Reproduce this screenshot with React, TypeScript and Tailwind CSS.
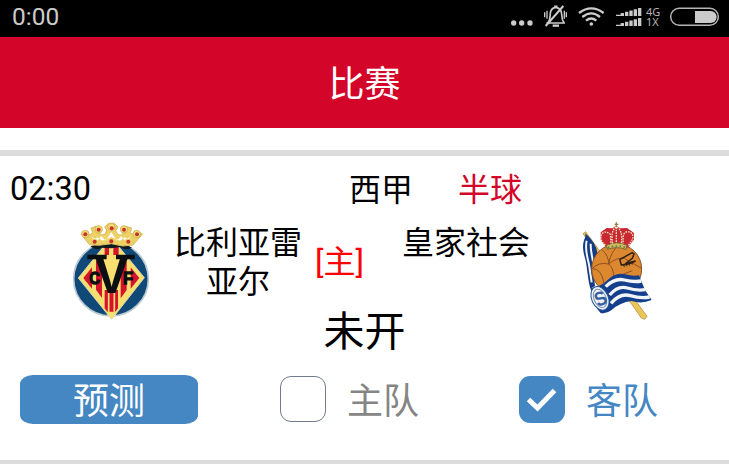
import React from 'react';

const signalBars = [1, 2, 3, 4, 5];

function StatusIcons() {
  return (
    <div className="flex h-[37px]">
      <svg className="h-[37px] w-[40px]" viewBox="0 0 120 111" fill="#cbcbcb">
        <circle cx="41" cy="69" r="8" />
        <circle cx="65" cy="69" r="8" />
        <circle cx="90" cy="69" r="8" />
      </svg>
      <svg className="h-[37px] w-[30px]" viewBox="120 0 90 111" fill="none" stroke="#cbcbcb" strokeWidth="5">
        <path d="M139 69h56M144 68c7-8 6-17 7-29 2-11 7-15 14-16v-4h5v4c10 2 14 9 15 19 1 9 0 18 7 26" />
        <path d="M190 18l-53 60" strokeWidth="6" />
        <path d="M158 77h19" strokeWidth="7" />
        <path d="M134 37v15M141 32v24M193 32v24M199 37v15" strokeWidth="4" />
      </svg>
      <svg className="h-[37px] w-[38px]" viewBox="210 0 114 111" fill="none" stroke="#cbcbcb" strokeWidth="7">
        <path d="M237 39q37-28 74 0M247 51q27-22 53 0M258 62q16-13 31 0" />
        <circle cx="274" cy="72" r="5.5" fill="#cbcbcb" stroke="none" />
      </svg>
      <svg className="h-[37px] w-[38px]" viewBox="324 0 114 111" fill="#cbcbcb">
        <path d="M348 44h24v4h-24zM348 74h24v4h-24z" />
        {signalBars.map((i) => (
          <React.Fragment key={i}>
            <rect x={349 + i * 13} y={43 - i * 3.8} width="10" height={5 + i * 3.8} />
            <rect x={349 + i * 13} y={73 - i * 3.8} width="10" height={5 + i * 3.8} />
          </React.Fragment>
        ))}
      </svg>
      <div className="w-[22px] pt-[7px] font-['Noto_Sans',sans-serif] text-[11px] leading-[10px] text-[#b5b5b5]">
        <div>4G</div>
        <div>1X</div>
      </div>
      <svg className="h-[37px] w-[61px]" viewBox="504 0 183 111">
        <rect x="512" y="25" width="143" height="51" rx="25.5" fill="none" stroke="#b5b5b5" strokeWidth="4.5" />
        <path d="M585 33h47a18 18 0 0 1 0 36h-47z" fill="#cbcbcb" />
      </svg>
    </div>
  );
}

function VillarrealCrest() {
  return (
    <svg className="h-[110px] w-[100px]" viewBox="0 0 300 330">
      <ellipse cx="153" cy="192" rx="112" ry="111" fill="#104878" stroke="#b9c9d1" strokeWidth="5" />
      <path d="M153 67L253 188L155 313L55 189Z" fill="#f7df70" stroke="#d9d8b1" strokeWidth="3" />
      <path d="M108 137l18 10v102l-18-25zM134 90l13-10v40h-13zM160 82l16 14v24h-16zM182 160l18-20v85l-18 25zM134 225h40v55l-8 10h-24l-8-10zM70 189l26-32v64zM212 157l26 32-26 32z" fill="#d4142c" />
      <path d="M146 230v70M163 230v66" stroke="#f7df70" strokeWidth="5" />
      <path d="M82 119h58v14h-58zM168 119h56v14h-56z" fill="#0b0f12" />
      <g fill="#0b0f12" fontFamily="Liberation Sans, sans-serif" fontWeight="700">
        <text x="103" y="234" fontSize="160" textLength="104" lengthAdjust="spacingAndGlyphs">V</text>
        <g stroke="#0b0f12" strokeWidth="4">
          <text x="88" y="208" fontSize="52" textLength="32" lengthAdjust="spacingAndGlyphs">C</text>
          <text x="189" y="208" fontSize="52" textLength="30" lengthAdjust="spacingAndGlyphs">F</text>
        </g>
      </g>
      <path d="M91 94l28-8 30 2 5-8 8 8 30-2 24 12q-20 10-34-2l-29 4-30-2q-15 11-32-4z" fill="#101b20" />
      <path d="M88 89L63 57l15-8 11 11 9-7-5-14 14-5 14 10-1 16 15-2 5-13-6-9 11-11h18l11 11-7 12 8 11 14 2-3-16 12-11 17 5-4 14 9 6 11-10 17 8-29 33-31 3-34-7-36 5z" fill="#eed164" stroke="#d7bd61" strokeWidth="3" />
      <path d="M93 64l21 12 10-14 12 15 18-25 17 25 13-14 9 13 22-13-10 10-11-6-14 10-26-11-27 11-14-10-10 6z" fill="white" />
      <g fill="#f5df76" stroke="#d3b75c" strokeWidth="3">
        {[[76,57],[116,43],[154,36],[192,43],[230,57]].map(([x,y]) => <circle key={x} cx={x} cy={y} r="11" />)}
      </g>
      <g fill="#c9312c">
        {[[76,58],[116,44],[155,40],[192,44],[231,58],[104,80],[154,79],[205,80]].map(([x,y]) => <circle key={x} cx={x} cy={y} r="6" />)}
      </g>
    </svg>
  );
}

function SociedadCrest() {
  return (
    <svg className="h-[110px] w-[100px]" viewBox="0 0 300 330">
      <path d="M39 56l8-6 184 254-7 9-10-4z" fill="#eac557" stroke="#a98337" strokeWidth="2" />
      <path d="M46 65c-12 26-6 46 0 68 6 25 6 53 15 88l14-8-5-45 12-55q-3-28-36-58z" fill="#163b85" />
      <path d="M50 77c-7 30 5 56 8 78l7 47M62 86c-1 28 9 49 9 76" fill="none" stroke="#f3f6f8" strokeWidth="6" />
      <circle cx="140" cy="162" r="75" fill="#db8830" stroke="#884e29" strokeWidth="3" />
      <path d="M95 103q22 20 21 44-30-7-49 14M116 147q17 15 15 42M116 147q25-21 47-17l50 29M131 189l56-22M148 88q-26 22-32 59M67 161q27 0 35 43" fill="none" stroke="#91511f" strokeWidth="3" />
      <path d="M150 133l37-20 5 4-5 13-22 17 31-9M149 133l5 17q20-1 43-12" fill="none" stroke="#302017" strokeWidth="4.5" />
      <path d="M160 147l3 9m5-11l3 9m5-11l3 9m5-12l3 9" stroke="#302017" strokeWidth="2.5" />
      <path d="M62 220Q94 215 112 196Q135 171 165 178Q190 185 207 181L225 225L245 255Q215 268 185 258Q150 262 125 285Q108 298 92 294Q65 270 62 220Z" fill="#153f8d" />
      <path d="M107 215Q134 188 163 195T214 198M119 240Q144 210 172 219T226 224M123 265Q150 233 181 242T239 246" fill="none" stroke="#f2f5f8" strokeWidth="10" />
      <ellipse cx="90" cy="250" rx="25" ry="37" transform="rotate(-24 90 250)" fill="#edf2f7" stroke="#265291" strokeWidth="3" />
      <ellipse cx="90" cy="250" rx="18" ry="29" transform="rotate(-24 90 250)" fill="none" stroke="#7894ba" strokeWidth="3" />
      <text x="91" y="272" textAnchor="middle" transform="rotate(-24 90 250)" fill="#365e9c" fontFamily="Liberation Sans, sans-serif" fontWeight="700" fontSize="60" textLength="35" lengthAdjust="spacingAndGlyphs">S</text>
      <path d="M108 96L92 75V52l18-13 17 1 12-8 12 8 20-1 21 15v20l-19 24-35-8z" fill="#c92832" />
      <path d="M109 91q31-15 62 0l-3 12q-28-10-56 0z" fill="#d8ba59" stroke="#796637" strokeWidth="3" />
      <path d="M106 91Q84 70 98 54q11-7 23 4l2 28M175 91q22-23 9-37-14-10-24 5l-1 27M128 85q-7-38 11-50 20 10 15 50M139 36v48" fill="none" stroke="#eee1bd" strokeWidth="4" strokeDasharray="5 3" />
      <path d="M113 98q29-10 57 0" fill="none" stroke="#4d8061" strokeWidth="5" strokeDasharray="5 7" />
      <path d="M139 22v14M134 28h11" stroke="#93813e" strokeWidth="4" />
    </svg>
  );
}

export default function App() {
  return (
    <main className="h-[464px] w-[729px] overflow-hidden bg-white font-[Roboto,'Noto_Sans_CJK_SC',sans-serif] text-[32px] text-black" lang="zh-CN">
      <header>
        <div className="flex h-[37px] items-start justify-between bg-black">
          <time className="pl-[12px] pt-[2px] text-[24.5px] leading-[30px] text-[#cbcbcb]">0:00</time>
          <StatusIcons />
        </div>
        <h1 className="flex h-[91px] items-center justify-center bg-[#d30528] pt-[4px] text-[36px] leading-none text-white">比赛</h1>
      </header>
      <section className="mt-[22px] h-[316px] border-y-[6px] border-[#dcdcdc]">
        <div className="flex h-[64px] items-center pl-[10px] pt-[3px] leading-none">
          <time className="w-[339px] text-[32.5px]">02:30</time>
          <span className="w-[109px]">西甲</span>
          <span className="text-[#d30528]">半球</span>
        </div>
        <div className="flex h-[84px] pl-[60px] leading-[39px]">
          <div className="-mt-[5px] w-[114px]"><VillarrealCrest /></div>
          <div className="w-[128px] pt-[4px] text-center">比利亚雷亚尔</div>
          <div className="w-[100px] pl-[13px] pt-[23px] text-[red]">[主]</div>
          <div className="w-[168px] pt-[4px]">皇家社会</div>
          <div className="-mt-[5px]"><SociedadCrest /></div>
        </div>
        <div className="flex h-[54px] items-center justify-center pt-[2px] text-[41px] leading-none">未开</div>
        <div className="flex h-[82px] items-center pl-[20px] text-[36px] leading-none">
          <button className="h-[49px] w-[178px] rounded-[13px/9px] bg-[#4587c3] pt-[6px] text-white">预测</button>
          <label className="ml-[82px] flex w-[239px] items-center text-[#858585]">
            <span className="mr-[21px] h-[46px] w-[46px] rounded-[11px] border-[1.5px] border-[#747b8c]" />
            <span className="pt-[6px]">主队</span>
          </label>
          <label className="flex items-center text-[#4587c3]">
            <svg className="mr-[21px] h-[47px] w-[46px] rounded-[11px] bg-[#4587c3]" viewBox="0 0 46 47" fill="none" stroke="white" strokeWidth="5">
              <path d="M9.5 23.5l9 8.5L35.5 14.5" />
            </svg>
            <span className="pt-[6px]">客队</span>
          </label>
        </div>
      </section>
    </main>
  );
}
